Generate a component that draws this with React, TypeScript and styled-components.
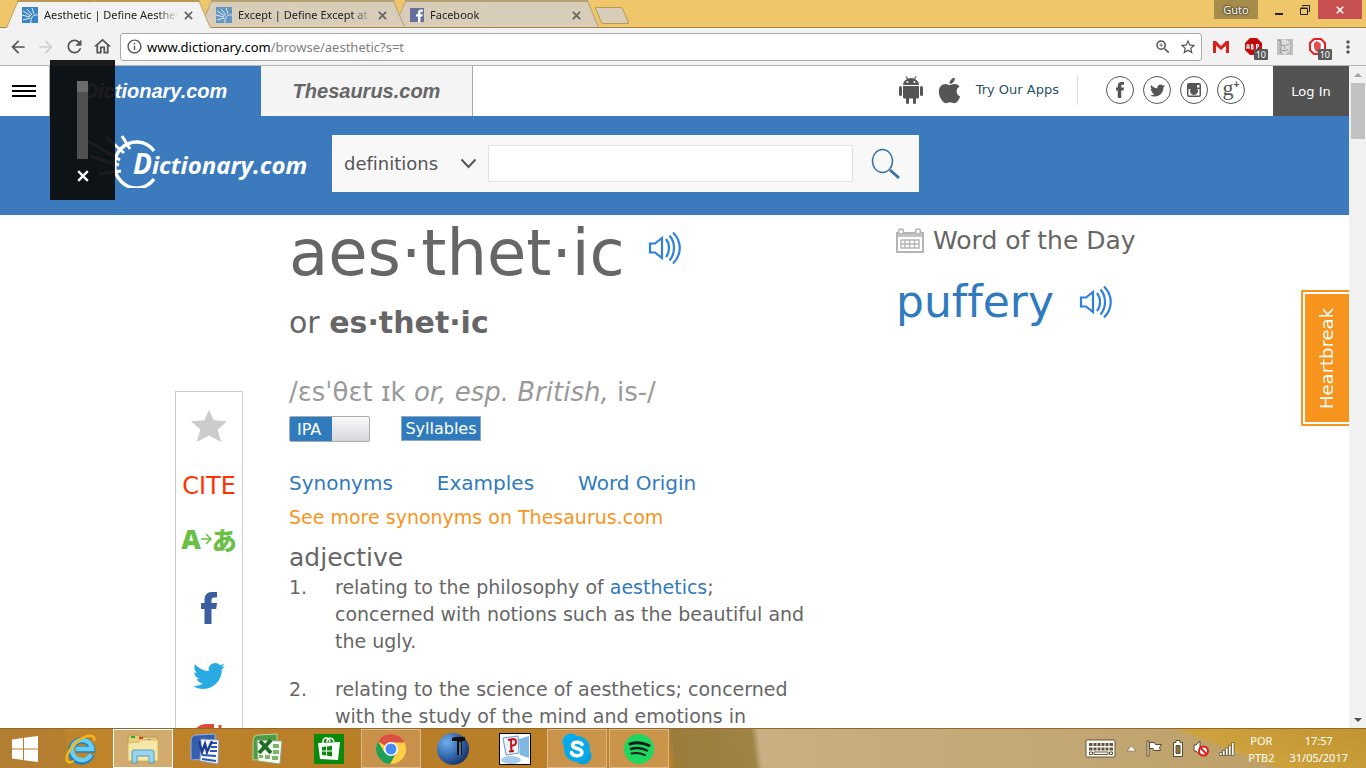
import React from 'react';
import styled, { createGlobalStyle, css } from 'styled-components';
import {
  MdArrowBack,
  MdArrowForward,
  MdRefresh,
  MdOutlineHome,
  MdInfoOutline,
  MdOutlineZoomIn,
  MdStarBorder,
  MdMoreVert,
} from 'react-icons/md';
import { FaApple, FaTwitter } from 'react-icons/fa';

const UI_FONT = '"Noto Sans", "Open Sans", sans-serif';
const SITE_FONT = '"DejaVu Sans", Verdana, sans-serif';
const BLUE = '#3c7abe';
const LINK = '#2f7bbd';

const GlobalStyle = createGlobalStyle`
  *, *::before, *::after { box-sizing: border-box; }
  body { margin: 0; overflow: hidden; background: #fff; }
  button, input, select { font: inherit; color: inherit; border: 0; padding: 0; margin: 0; background: none; border-radius: 0; }
  h1, h2, h3, p, ol { margin: 0; padding: 0; font-weight: 400; }
  a { color: inherit; text-decoration: none; }
  svg { display: block; flex: none; }
`;

const Screen = styled.div`
  height: 100vh;
  display: flex;
  flex-direction: column;
  font-family: ${UI_FONT};
`;

/* ---------- browser window ---------- */

const TitleBar = styled.header`
  display: flex;
  height: 28px;
  flex: none;
  background: #efc66a;
  box-shadow: inset 0 -1px 0 #a8854a;
`;

const TabStrip = styled.nav`
  display: flex;
  flex: 1;
  padding-left: 6px;
`;

const TabShell = styled.div<{ $active?: boolean; $order: number }>`
  --fill: ${(p) => (p.$active ? '#f2f2f2' : '#d7cdb9')};
  --edge: ${(p) => (p.$active ? '#b99a52' : '#b3a070')};
  position: relative;
  z-index: ${(p) => p.$order};
  display: flex;
  align-items: center;
  width: 205px;
  height: 28px;
  margin-right: -11px;
  padding: 2px 15px 0 16px;
  font-size: 11px;
  color: #222;

  &::before,
  &::after {
    content: '';
    position: absolute;
    z-index: -1;
    top: 0;
    bottom: ${(p) => (p.$active ? '0' : '1px')};
    width: 51%;
    background: var(--fill);
    border-top: 2px solid var(--edge);
  }
  &::before {
    left: 0;
    border-left: 1px solid var(--edge);
    transform: skewX(-23deg);
    transform-origin: bottom left;
  }
  &::after {
    right: 0;
    border-right: 1px solid var(--edge);
    transform: skewX(23deg);
    transform-origin: bottom right;
  }
`;

const TabTitle = styled.a`
  flex: 1;
  margin-left: 6px;
  overflow: hidden;
  white-space: nowrap;
  line-height: 18px;
  mask-image: linear-gradient(90deg, #000 85%, transparent);
`;

const TabClose = styled.button`
  display: grid;
  place-items: center;
  width: 16px;
  height: 16px;
  margin-left: 2px;
  color: #666;
`;

const NewTab = styled.button`
  align-self: flex-start;
  width: 28px;
  height: 17px;
  margin: 7px 0 0 10px;
  background: #d7cdb9;
  border: 1px solid #b99a52;
  border-radius: 2px;
  transform: skewX(23deg);
`;

const WindowControls = styled.div`
  display: flex;
  align-items: flex-start;
  padding-right: 4px;
`;

const ProfileButton = styled.button`
  width: 44px;
  height: 19px;
  margin-right: 8px;
  background: #a68c4a;
  color: #fff;
  font-size: 11px;
  line-height: 17px;
  text-shadow: 0 0 2px #222, 0 0 2px #222;
`;

const WindowButton = styled.button<{ $close?: boolean }>`
  display: grid;
  place-items: center;
  width: ${(p) => (p.$close ? '44px' : '26px')};
  height: 19px;
  color: ${(p) => (p.$close ? '#fff' : '#222')};
  background: ${(p) => (p.$close ? '#c75050' : 'transparent')};
`;

const Toolbar = styled.div`
  display: flex;
  align-items: center;
  height: 38px;
  flex: none;
  padding: 0 3px 0 4px;
  background: #f2f2f2;
  border-bottom: 1px solid #b4b4b4;
  color: #555;
`;

const ToolButton = styled.button<{ $dim?: boolean; $width?: number }>`
  position: relative;
  display: grid;
  place-items: center;
  width: ${(p) => p.$width ?? 28}px;
  height: 28px;
  flex: none;
  color: ${(p) => (p.$dim ? '#d0d0d0' : '#555')};
`;

const Omnibox = styled.div`
  flex: 1;
  display: flex;
  align-items: center;
  height: 28px;
  margin: 0 3px 0 4px;
  padding: 0 1px 0 5px;
  background: #fff;
  border: 1px solid #a9a9a9;
  border-radius: 3px;
`;

const Address = styled.div`
  flex: 1;
  margin-left: 4px;
  font-size: 13px;
  line-height: 20px;
  color: #808080;
  outline: none;
  white-space: nowrap;
  strong { font-weight: 400; color: #000; }
`;

const CountBadge = styled.span`
  position: absolute;
  right: 1px;
  bottom: 1px;
  padding: 0 2px;
  background: #5a5a5a;
  border-radius: 1px;
  color: #fff;
  font: 9px/11px ${UI_FONT};
`;

/* ---------- web page ---------- */

const Viewport = styled.div`
  flex: 1;
  min-height: 0;
  display: flex;
  position: relative;
`;

const Page = styled.div`
  flex: 1;
  min-width: 0;
  overflow: hidden;
  background: #fff;
  color: #666;
  font-family: ${SITE_FONT};
  font-variant-ligatures: none;
`;

const TopBar = styled.div`
  display: flex;
  height: 50px;
  color: #555;
`;

const MenuButton = styled.button`
  display: flex;
  flex-direction: column;
  justify-content: center;
  gap: 3px;
  width: 50px;
  padding-left: 12px;
  border-right: 1px solid #aaa;
  i { display: block; width: 24px; height: 2px; background: #000; }
`;

const SiteTab = styled.a<{ $current?: boolean }>`
  display: grid;
  place-items: center;
  width: ${(p) => (p.$current ? '211px' : '212px')};
  font: italic bold 20px/50px "Liberation Sans", Arial, sans-serif;
  ${(p) =>
    p.$current
      ? css`background: ${BLUE}; color: #fff;`
      : css`background: #f4f4f4; color: #666; border-right: 1px solid #aaa;`}
`;

const TopLinks = styled.div`
  display: flex;
  align-items: center;
  margin-left: auto;
  padding-bottom: 2px;
`;

const AppsLink = styled.a`
  display: flex;
  align-items: center;
  gap: 12px;
  padding-right: 18px;
  border-right: 1px solid #ddd;
  line-height: 30px;
  font-size: 13px;
  color: #2c4f66;
  svg { color: #555; }
`;

const SocialRow = styled.div`
  display: flex;
  gap: 9px;
  padding: 0 28px;
`;

const SocialCircle = styled.a`
  display: grid;
  place-items: center;
  width: 28px;
  height: 28px;
  border: 1px solid #555;
  border-radius: 50%;
  color: #555;
`;

const GooglePlus = styled.span`
  font: 22px/20px "Liberation Serif", serif;
  margin-top: -5px;
  sup { font: bold 10px/10px "Liberation Sans", sans-serif; vertical-align: 7px; }
`;

const LoginButton = styled.button`
  width: 76px;
  background: #535353;
  color: #fff;
  font-size: 13px;
`;

const Masthead = styled.div`
  display: flex;
  align-items: center;
  height: 99px;
  padding: 0 20px 4px 76px;
  background: ${BLUE};
`;

const Logo = styled.a`
  display: flex;
  align-items: center;
  width: 256px;
  padding-bottom: 6px;
  color: #fff;
  font: italic bold 24px/36px "Open Sans", "Noto Sans", sans-serif;
  span { margin: 6px 0 0 -33px; }
  span::first-letter { font-size: 28px; }
`;

const SearchForm = styled.form`
  display: flex;
  align-items: center;
  height: 57px;
  flex: 0 1 587px;
  padding-left: 8px;
  background: #f8f8f8;
`;

const SelectWrap = styled.label`
  display: flex;
  align-items: center;
  width: 148px;
  color: #555;
  select {
    width: 120px;
    height: 37px;
    padding-left: 4px;
    appearance: none;
    font-size: 18px;
  }
`;

const SearchInput = styled.input`
  flex: 1;
  min-width: 0;
  height: 37px;
  background: #fff;
  border: 1px solid #e2e2e2;
  font-size: 18px;
`;

const SearchButton = styled.button`
  width: 66px;
  display: grid;
  place-items: center;
`;

const Content = styled.div`
  display: grid;
  grid-template-columns: 68px 1fr 278px;
  column-gap: 46px;
  max-width: 999px;
  margin: 0 auto;
`;

const Rail = styled.aside`
  margin-top: 176px;
  padding-top: 4px;
  border: 1px solid #ccc;
`;

const RailItem = styled.a<{ $height: number }>`
  display: grid;
  place-items: center;
  height: ${(p) => p.$height}px;
  font-size: 24px;
  color: #f30;
`;

const TranslateMark = styled.span`
  display: flex;
  align-items: center;
  color: #6abf47;
  font: bold 27px/30px "Open Sans", "Noto Sans CJK JP", sans-serif;
  b:last-child { font: 900 25px/30px "Noto Sans CJK JP", sans-serif; }
`;

const Entry = styled.main`
  padding-right: 40px;
`;

const Headword = styled.div`
  display: flex;
  align-items: center;
  gap: 23px;
  h1 { font-size: 64px; line-height: 76px; }
  button { margin-bottom: 10px; }
`;

const Variant = styled.p`
  font-size: 30px;
  line-height: 64px;
`;

const Pronunciation = styled.p`
  margin-top: 17px;
  font-size: 26px;
  line-height: 40px;
  white-space: nowrap;
  color: #999;
`;

const Controls = styled.div`
  display: flex;
  gap: 31px;
  margin-top: 4px;
  font-size: 16px;
  color: #fff;
`;

const Switch = styled.label`
  position: relative;
  display: flex;
  width: 81px;
  height: 26px;
  padding-left: 7px;
  line-height: 25px;
  border: 1px solid #aaa;
  border-radius: 2px;
  background: linear-gradient(90deg, ${LINK} 42px, transparent 42px), linear-gradient(#fafafa, #d5d7da);
  input { position: absolute; inset: 0; width: 100%; height: 100%; appearance: none; }
`;

const Syllables = styled.button`
  width: 80px;
  height: 25px;
  background: ${LINK};
  border: 1px solid #8fa9c0;
  line-height: 23px;
`;

const JumpLinks = styled.nav`
  display: flex;
  gap: 44px;
  margin-top: 26px;
  font-size: 20px;
  line-height: 30px;
  color: ${LINK};
`;

const MoreLink = styled.a`
  display: block;
  margin-top: 4px;
  font-size: 19px;
  line-height: 30px;
  color: #f7941d;
`;

const PartOfSpeech = styled.h2`
  margin-top: 11px;
  font-size: 25px;
  line-height: 30px;
`;

const Definitions = styled.ol`
  list-style: none;
  margin-top: 1px;
`;

const Definition = styled.li`
  display: grid;
  grid-template-columns: 46px 1fr;
  margin-bottom: 21px;
  font-size: 19px;
  line-height: 27px;
  a { color: ${LINK}; }
`;

const WordOfDay = styled.aside`
  padding-top: 11px;
`;

const WordHeading = styled.h2`
  display: flex;
  align-items: center;
  gap: 9px;
  font-size: 25px;
  line-height: 30px;
  white-space: nowrap;
`;

const DailyWord = styled.div`
  display: flex;
  align-items: center;
  gap: 25px;
  margin-top: 18px;
  font-size: 44px;
  line-height: 56px;
  color: ${LINK};
`;

const Ribbon = styled.a`
  position: absolute;
  top: 224px;
  right: 17px;
  width: 48px;
  height: 136px;
  padding: 2px 0 2px 2px;
  border: 2px solid #f7941d;
  border-right: 0;
  border-radius: 2px 0 0 2px;
  background: #fff;
  span {
    display: grid;
    place-items: center;
    height: 100%;
    background: #f7941d;
    color: #fff;
    font: 18px/44px ${SITE_FONT};
    writing-mode: vertical-rl;
    transform: rotate(180deg);
  }
`;

const ScrollBar = styled.div`
  display: flex;
  flex-direction: column;
  align-items: center;
  width: 17px;
  flex: none;
  background: #f1f1f1;
  div { width: 14px; height: 56px; margin-bottom: auto; background: #c1c1c1; }
  button { display: grid; place-items: center; width: 17px; height: 17px; }
`;

const VolumePanel = styled.div`
  position: absolute;
  z-index: 5;
  top: 60px;
  left: 50px;
  display: flex;
  flex-direction: column;
  align-items: center;
  gap: 11px;
  width: 65px;
  height: 140px;
  padding-top: 21px;
  background: rgba(11, 11, 11, 0.93);
  color: #fff;
`;

const VolumeSlider = styled.input`
  width: 11px;
  height: 78px;
  margin: 0;
  appearance: none;
  writing-mode: vertical-lr;
  direction: rtl;
  background: #505050;
  &::-webkit-slider-runnable-track { width: 11px; height: 78px; }
  &::-webkit-slider-thumb { appearance: none; width: 11px; height: 11px; background: #6c6c6c; }
`;

/* ---------- desktop task bar ---------- */

const TaskBar = styled.footer`
  display: flex;
  align-items: stretch;
  height: 40px;
  flex: none;
  border-top: 1px solid #8f6a2c;
  background:
    linear-gradient(21deg, transparent 44%, #cda23c 48%, #c0952f 100%) right / 250px 100% no-repeat,
    linear-gradient(83deg, #b27e31 0, #b57f30 66px, #c0842a 72px, #b87d28 400px, #bd8128 665px, #9b7c3b 672px, #9e8345 750px, #c8b083 757px, #c1a673 1100px, #bb9c60 100%);
`;

const TaskButton = styled.button<{ $state?: 'open' | 'active'; $start?: boolean }>`
  display: grid;
  place-items: center;
  width: ${(p) => (p.$start ? '50px' : '60px')};
  margin-right: ${(p) => (p.$start ? '1px' : '2px')};
  border: 1px solid transparent;
  ${(p) => p.$state === 'open' && css`background: rgba(232, 190, 150, 0.32); border-color: #dcb98a;`}
  ${(p) => p.$state === 'active' && css`background: rgba(232, 210, 180, 0.5); border-color: #fff;`}
`;

const Tray = styled.div`
  display: flex;
  align-items: center;
  margin-left: auto;
  padding-right: 18px;
  color: #fff;
  font-size: 11px;
  line-height: 17px;
  text-align: center;
`;

const TrayIcons = styled.div`
  display: flex;
  align-items: center;
  gap: 10px;
  margin-right: 13px;
`;

const TrayText = styled.div`
  margin-right: 15px;
  &:last-child { margin-right: 0; }
`;

/* ---------- drawings ---------- */

const SunFavicon = ({ dim }: { dim?: boolean }) => (
  <svg width="16" height="16" viewBox="0 0 16 16" opacity={dim ? 0.75 : 1}>
    <rect width="16" height="16" fill="#3c86c8" />
    <g stroke="#e8f1f8" strokeWidth="1" fill="none">
      <path d="M1 4l8 5M5 2l5 6M10 1l2 6M0 8l8 2M1 13l7-2M16 8c-4-1-8 2-7 8" />
    </g>
  </svg>
);

const FacebookFavicon = () => (
  <svg width="14" height="14" viewBox="0 0 14 14">
    <rect width="14" height="14" fill="#66719b" />
    <path d="M8 14V8.500H6V6.300h2V4.500C8 2.500 9.200 1.500 11 1.500h1.800v2.200h-1.300c-.8 0-1.100.4-1.100 1.100v1.500h2.300l-.3 2.200h-2V14z" fill="#fff" />
  </svg>
);

const Cross = ({ size = 9, width = 2 }: { size?: number; width?: number }) => (
  <svg width={size} height={size} viewBox="0 0 10 10" stroke="currentColor" strokeWidth={width}>
    <path d="M1 1l8 8M9 1l-8 8" />
  </svg>
);

const Speaker = () => (
  <svg width="34" height="34" viewBox="0 0 34 34" fill="none" stroke="#2f7fdc" strokeWidth="2.200">
    <path d="M2 12.500h5l7-5.500v20l-7-5.500H2z" />
    <path d="M18 8c4 5 4 13 0 18M21.500 4.500c6 7 6 18 0 25M25 1.500c9 9 9 22 0 31" />
  </svg>
);

const SunLogo = () => (
  <svg width="90" height="54" viewBox="0 0 90 54" fill="none" stroke="#fff" strokeWidth="3">
    <path d="M78 17a22 23 0 1 0 0 28" strokeWidth="3.500" />
    <path d="M46 2l8 13M30 3l18 16M12 7l32 19M14 22l29 9M23 40l22-3" />
  </svg>
);

/* Stocky letter mark used both in the header circle and in the share rail. */
const FacebookMark = ({ width, color = 'currentColor' }: { width: number; color?: string }) => (
  <svg width={width} height={width * 2} viewBox="0 0 16 32" fill={color}>
    <path d="M3.500 32V17H0v-6h3.500V8C3.500 3 6 0 11 0h5v5.500h-3c-2 0-2.500 1-2.500 2.500v3H16l-.8 6h-4.700v15z" />
  </svg>
);

const AndroidMark = () => (
  <svg width="24" height="28" viewBox="0 0 24 28" fill="#555">
    <path fillRule="evenodd" d="M4 9c0-3 2-5 4-6L6.500.7l.8-.6L9 2.500c2-.7 4-.7 6 0L16.700.1l.8.6L16 3c2 1 4 3 4 6zM8.500 5a1 1 0 1 0 0 2 1 1 0 1 0 0-2zm7 0a1 1 0 1 0 0 2 1 1 0 1 0 0-2z" />
    <path d="M4 10h16v11q0 1.500-1.500 1.500H17V27q0 1-1.500 1T14 27v-4.500h-4V27q0 1-1.500 1T7 27v-4.500H5.500Q4 22.500 4 21z" />
    <rect y="10" width="3" height="10" rx="1.500" />
    <rect x="21" y="10" width="3" height="10" rx="1.500" />
  </svg>
);

const InstagramMark = () => (
  <svg width="16" height="16" viewBox="0 0 16 16">
    <path fillRule="evenodd" fill="#555" d="M3 1h10a2 2 0 0 1 2 2v10a2 2 0 0 1-2 2H3a2 2 0 0 1-2-2V3a2 2 0 0 1 2-2zm8 2v2.500h2.500V3zM2.500 7v6.500h11V7h-2a4 4 0 1 1-7 0z" />
    <circle cx="8" cy="8.800" r="2.500" fill="#555" />
  </svg>
);

const GooglePlusMark = () => (
  <svg width="34" height="36" viewBox="0 0 34 36" fill="none" stroke="#dd4b39" strokeWidth="4">
    <path d="M22 2h-9c-11 1-11 14-1 14 8-1 8-11 1-13M12 16c-2 4 9 5 8 11-1 7-17 7-17 0 0-4 5-5 10-5" />
    <path d="M28 1v14M22 8h12" strokeWidth="3" />
  </svg>
);

const CalendarIcon = () => (
  <svg width="28" height="26" viewBox="0 0 28 26" fill="none" stroke="#b5b5b5">
    <path d="M1 5h26v19H1z" strokeWidth="2" />
    <path d="M2 6h24v3H2z" fill="#c4c4c4" stroke="none" />
    <circle cx="5" cy="3.500" r="2.500" fill="#fff" strokeWidth="1.500" />
    <circle cx="22" cy="3.500" r="2.500" fill="#fff" strokeWidth="1.500" />
    <path d="M5 12h18v8H5zM5 16h18M9 12v8M13.500 12v8M18.500 12v8" strokeWidth="1.400" />
  </svg>
);

const StartIcon = () => (
  <svg width="28" height="28" viewBox="0 0 28 28" fill="#fff">
    <path d="M1 4.500l11-1.500v10.500H1zM13 2.800L27 1v12.500H13zM1 14.500h11V25L1 23.500zM13 14.500h14V27l-14-1.800z" />
  </svg>
);

const IeIcon = () => (
  <svg width="32" height="32" viewBox="0 0 32 32" fill="none">
    <path d="M26.500 21.500A10.500 10.500 0 1 1 27 16.500H11" stroke="#1f7fb8" strokeWidth="6.500" />
    <path d="M26 21.500A10 10 0 1 1 27 16H11" stroke="#66cdf5" strokeWidth="4.500" />
    <path d="M29 8c2-7-7-7-16 0S-1 26 3 29c2 1 4 0 6-1" stroke="#f5b818" strokeWidth="2.500" />
  </svg>
);

const FolderIcon = () => (
  <svg width="34" height="32" viewBox="0 0 34 32">
    <path d="M2 5l2-3h8l2 2h16l2 3v21H2z" fill="#e8cf78" stroke="#b89a4a" />
    <path d="M5 3h4v2H5z" fill="#1eae3c" />
    <path d="M13 4h4v2h-4z" fill="#d43b2a" />
    <path d="M21 6h4v2h-4z" fill="#2d8fe0" />
    <path d="M2 10l11-1 2-2h17v21H2z" fill="#f7e7a6" stroke="#d3b964" />
    <path d="M6 30V19q0-2 2-2h18q2 0 2 2v11h-5v-7H11v7z" fill="#9bd4ee" stroke="#4c9cc4" />
  </svg>
);

const WordIcon = () => (
  <svg width="32" height="32" viewBox="0 0 32 32">
    <path d="M2 27V8q0-6 6-6l18-1v24z" fill="#3560ae" stroke="#8fb0e8" />
    <path d="M12 6l18 1-1 24-18-3z" fill="#f5f8ff" stroke="#8899bb" />
    <path d="M10 8l3 11 3-8 2 8 5-11" fill="none" stroke="#1c3f94" strokeWidth="2.500" />
    <path d="M23 10h5M22 14h6M21 18h7M13 22l14 1M13 26l14 2" stroke="#2c55ab" strokeWidth="2" />
  </svg>
);

const ExcelIcon = () => (
  <svg width="32" height="32" viewBox="0 0 32 32">
    <path d="M2 27V8q0-6 6-6l18-1v24z" fill="#4e9a45" stroke="#b4dba0" />
    <path d="M6 7l25 1-2 23-22-3z" fill="#f4faf0" stroke="#88a880" />
    <path d="M9 8l11 12M20 7L8 20" stroke="#1f6e28" strokeWidth="4" />
    <path d="M22 11h6v4h-6zM22 17h6v4h-6zM21 23h6v4h-6zM14 22h5v4h-5zM8 22h4v3H8z" fill="#7fb36f" />
  </svg>
);

const StoreIcon = () => (
  <svg width="30" height="30" viewBox="0 0 30 30">
    <rect width="30" height="30" fill="#0a8a0a" />
    <path d="M4 9l22-1-2 18L6 25z" fill="#fff" />
    <path d="M9 9c-1-6 6-7 7-1M13 8c0-5 6-5 7 0" fill="none" stroke="#fff" strokeWidth="1.500" />
    <path d="M8 13l4-.5v4H8zM13 12.400l5-.6v4.700h-5zM8 17.500h4v4L8 21zM13 17.500h5v5l-5-.7z" fill="#0a8a0a" />
  </svg>
);

const ChromeIcon = () => (
  <svg width="32" height="32" viewBox="0 0 32 32">
    <circle cx="16" cy="16" r="15" fill="#fdd045" />
    <path d="M16 16L3 8.500A15 15 0 0 1 29.500 9.500H16z" fill="#dd5144" />
    <path d="M3 8.500A15 15 0 0 0 15 31l6.500-11.500L16 16 9.500 19.500z" fill="#1f9e5a" />
    <circle cx="16" cy="16" r="7" fill="#fff" />
    <circle cx="16" cy="16" r="5.500" fill="#4a8af4" />
  </svg>
);

const GlobeTIcon = () => (
  <svg width="34" height="34" viewBox="0 0 34 34">
    <defs>
      <radialGradient id="globe" cx=".3" cy=".3" r=".8">
        <stop offset="0" stopColor="#6fb0ec" />
        <stop offset=".6" stopColor="#2f62a8" />
        <stop offset="1" stopColor="#16305e" />
      </radialGradient>
    </defs>
    <circle cx="17" cy="17" r="16" fill="url(#globe)" />
    <path d="M16 6q4-2 13-1v4h-3v14h-5V9h-5z" fill="#111" />
    <path d="M24 10v13" stroke="#6f92c0" strokeWidth="1.500" />
  </svg>
);

const PIcon = () => (
  <svg width="32" height="32" viewBox="0 0 32 32">
    <rect x=".5" y=".5" width="31" height="31" fill="#fff" stroke="#000" />
    <path d="M20 6l10-3v22l-9-3z" fill="#7db7e4" />
    <ellipse cx="12" cy="27" rx="10" ry="4" fill="#a8cdec" />
    <path d="M4 5l15-2 1 17-13 2z" fill="#eaf2fa" stroke="#6c9ccc" />
    <path d="M9 7l5-1c4 0 4 6 0 6.500l-2 .3.500 5.200M12 6.500L12.500 18M10 18.500l5-.6" fill="none" stroke="#c01818" strokeWidth="2" />
  </svg>
);

const SkypeIcon = () => (
  <svg width="32" height="32" viewBox="0 0 32 32">
    <circle cx="10" cy="9" r="8.500" fill="#00aff0" />
    <circle cx="22" cy="23" r="8.500" fill="#0aa0dc" />
    <circle cx="16" cy="16" r="13" fill="#05a9ea" />
    <path d="M21 11.500c-1-3-9-3.500-9.500.5-.3 4.500 9.500 2.500 9.500 7.500-.3 4.500-9.500 4-10.500 0" fill="none" stroke="#fff" strokeWidth="3.500" strokeLinecap="round" />
  </svg>
);

const SpotifyIcon = () => (
  <svg width="32" height="32" viewBox="0 0 32 32" fill="none" stroke="#15201a" strokeLinecap="round">
    <circle cx="16" cy="16" r="15" fill="#1ed760" stroke="none" />
    <path d="M7 11c6-2 13-1.500 19 1.500" strokeWidth="3" />
    <path d="M8 16c5-1.500 11-1 16 1.500" strokeWidth="2.500" />
    <path d="M8.500 20.500c5-1 9-.6 13.500 1.600" strokeWidth="2" />
  </svg>
);

const Extensions = () => (
  <>
    <ToolButton $width={32} aria-label="Mail">
      <svg width="16" height="12" viewBox="0 0 16 12">
        <rect width="16" height="12" fill="#f4eeee" />
        <path d="M0 0h3l5 5 5-5h3v12h-3V4.500L8 9 3 4.500V12H0z" fill="#d8201c" />
      </svg>
    </ToolButton>
    <ToolButton $width={32} aria-label="Ad blocker">
      <svg width="17" height="17" viewBox="0 0 17 17">
        <path d="M5 0h7l5 5v7l-5 5H5l-5-5V5z" fill="#c4090b" />
        <path d="M2 11V7.500q0-1 1-1t1 1V11M2 9.500h2M6.500 6.500V11h1.200q1.300-1.100 0-2.200 1-1.200-.2-2.300zM11.500 11V6.500h1.200q1.800 1.300 0 2.500h-1" fill="none" stroke="#fff" strokeWidth="1.100" />
      </svg>
      <CountBadge>10</CountBadge>
    </ToolButton>
    <ToolButton $width={32} aria-label="Portrait">
      <svg width="16" height="16" viewBox="0 0 16 16">
        <rect width="16" height="16" fill="#bdbdbd" />
        <path d="M4 2c3-3 8-1 9 4l-1 6-4 4-3-2-2-6z" fill="#dedede" />
        <path d="M4 6l3 .5M9 6l3-.5M8 6l-.5 4M5 11q3 2 6-.5M1 1l3 1v12" fill="none" stroke="#909090" />
      </svg>
    </ToolButton>
    <ToolButton $width={32} aria-label="Content blocker">
      <svg width="17" height="17" viewBox="0 0 17 17">
        <path d="M5 1h7l4 4v7l-4 4H5l-4-4V5z" fill="#fff" stroke="#e81f25" strokeWidth="2" />
        <path d="M5 9V5q1-1 1.500 0V4q1-2 2 0 1-1 1.700.3V5q1-.8 1.500.5V10q-.5 4-3.200 4Q6 14 5 9z" fill="#e84c50" />
      </svg>
      <CountBadge>10</CountBadge>
    </ToolButton>
    <ToolButton $width={30} aria-label="Menu"><MdMoreVert size={20} /></ToolButton>
  </>
);

const tabs = [
  { title: 'Aesthetic | Define Aesthetic', icon: <SunFavicon />, active: true },
  { title: 'Except | Define Except at Dictionary', icon: <SunFavicon dim />, active: false },
  { title: 'Facebook', icon: <FacebookFavicon />, active: false },
];

type Task = { name: string; icon: React.ReactNode; state?: 'open' | 'active' };
const tasks: Task[] = [
  { name: 'Internet Explorer', icon: <IeIcon /> },
  { name: 'File Explorer', icon: <FolderIcon />, state: 'active' },
  { name: 'Word', icon: <WordIcon /> },
  { name: 'Excel', icon: <ExcelIcon /> },
  { name: 'Store', icon: <StoreIcon /> },
  { name: 'Chrome', icon: <ChromeIcon />, state: 'open' },
  { name: 'T', icon: <GlobeTIcon /> },
  { name: 'P', icon: <PIcon /> },
  { name: 'Skype', icon: <SkypeIcon />, state: 'open' },
  { name: 'Spotify', icon: <SpotifyIcon />, state: 'open' },
];

export default function App() {
  return (
    <Screen>
      <GlobalStyle />
      <TitleBar>
        <TabStrip>
          {tabs.map((tab, i) => (
            <TabShell key={tab.title} $active={tab.active} $order={3 - i}>
              {tab.icon}
              <TabTitle href="#">{tab.title}</TabTitle>
              <TabClose aria-label="Close tab"><Cross /></TabClose>
            </TabShell>
          ))}
          <NewTab aria-label="New tab" />
        </TabStrip>
        <WindowControls>
          <ProfileButton>Guto</ProfileButton>
          <WindowButton aria-label="Minimize">
            <svg width="8" height="12" viewBox="0 0 8 12"><path d="M0 9h8v2H0z" fill="currentColor" /></svg>
          </WindowButton>
          <WindowButton aria-label="Restore">
            <svg width="10" height="10" viewBox="0 0 10 10" fill="none" stroke="currentColor">
              <path d="M.5 3.500h7v6h-7zM.5 3h7M2.500 1.500V.5h7v6h-1" />
            </svg>
          </WindowButton>
          <WindowButton $close aria-label="Close"><Cross size={8} /></WindowButton>
        </WindowControls>
      </TitleBar>
      <Toolbar>
        <ToolButton aria-label="Back"><MdArrowBack size={20} /></ToolButton>
        <ToolButton aria-label="Forward" $dim><MdArrowForward size={20} /></ToolButton>
        <ToolButton aria-label="Reload"><MdRefresh size={21} /></ToolButton>
        <ToolButton aria-label="Home"><MdOutlineHome size={21} /></ToolButton>
        <Omnibox>
          <MdInfoOutline size={17} />
          <Address role="textbox" aria-label="Address">
            <strong>www.dictionary.com</strong>/browse/aesthetic?s=t
          </Address>
          <ToolButton $width={25} aria-label="Zoom"><MdOutlineZoomIn size={18} /></ToolButton>
          <ToolButton $width={25} aria-label="Bookmark"><MdStarBorder size={18} /></ToolButton>
        </Omnibox>
        <Extensions />
      </Toolbar>

      <Viewport>
        <Page>
          <TopBar>
            <MenuButton aria-label="Site menu"><i /><i /><i /></MenuButton>
            <SiteTab href="#" $current>Dictionary.com</SiteTab>
            <SiteTab href="#">Thesaurus.com</SiteTab>
            <TopLinks>
              <AppsLink href="#">
                <AndroidMark />
                <FaApple size={29} />
                Try Our Apps
              </AppsLink>
              <SocialRow>
                <SocialCircle href="#" aria-label="Facebook"><FacebookMark width={8} /></SocialCircle>
                <SocialCircle href="#" aria-label="Twitter"><FaTwitter size={15} /></SocialCircle>
                <SocialCircle href="#" aria-label="Instagram"><InstagramMark /></SocialCircle>
                <SocialCircle href="#" aria-label="Google Plus"><GooglePlus>g<sup>+</sup></GooglePlus></SocialCircle>
              </SocialRow>
            </TopLinks>
            <LoginButton>Log In</LoginButton>
          </TopBar>
          <Masthead>
            <Logo href="#"><SunLogo /><span>Dictionary.com</span></Logo>
            <SearchForm onSubmit={(e) => e.preventDefault()}>
              <SelectWrap>
                <select aria-label="Search in">
                  <option>definitions</option>
                  <option>synonyms</option>
                </select>
                <svg width="17" height="11" viewBox="0 0 17 11" fill="none" stroke="#555" strokeWidth="2">
                  <path d="M1.500 1.500l7 7.500 7-7.500" />
                </svg>
              </SelectWrap>
              <SearchInput aria-label="Search" />
              <SearchButton aria-label="Search">
                <svg width="30" height="32" viewBox="0 0 30 32" fill="none" stroke="#3b73a5">
                  <ellipse cx="11.500" cy="13" rx="10" ry="11.500" strokeWidth="1.500" />
                  <path d="M19 22l9 8" strokeWidth="3" />
                </svg>
              </SearchButton>
            </SearchForm>
          </Masthead>

          <Content>
            <Rail>
              <RailItem href="#" $height={60} aria-label="Favorite">
                <svg width="36" height="34" viewBox="0 0 38 34" fill="#ccc">
                  <path d="M19 0l5 11 14 1-10 9 4 13-13-7-13 7 4-13L0 12l14-1z" />
                </svg>
              </RailItem>
              <RailItem href="#" $height={60}>CITE</RailItem>
              <RailItem href="#" $height={46}>
                <TranslateMark>
                  <b>A</b>
                  <svg width="11" height="12" viewBox="0 0 11 12" fill="none" stroke="currentColor" strokeWidth="1.500">
                    <path d="M0 6h10M5 1l5 5-5 5" />
                  </svg>
                  <b>あ</b>
                </TranslateMark>
              </RailItem>
              <RailItem href="#" $height={92} aria-label="Share on Facebook"><FacebookMark width={16} color="#3b5ea0" /></RailItem>
              <RailItem href="#" $height={44} aria-label="Share on Twitter"><FaTwitter size={32} color="#29aae3" /></RailItem>
              <RailItem href="#" $height={88} aria-label="Share on Google Plus"><GooglePlusMark /></RailItem>
            </Rail>

            <Entry>
              <Headword>
                <h1>aes·thet·ic</h1>
                <button aria-label="Listen"><Speaker /></button>
              </Headword>
              <Variant>or <b>es·thet·ic</b></Variant>
              <Pronunciation>/ɛsˈθɛt ɪk <i>or, esp. British,</i> is-/</Pronunciation>
              <Controls>
                <Switch>IPA<input type="checkbox" aria-label="IPA" defaultChecked /></Switch>
                <Syllables>Syllables</Syllables>
              </Controls>
              <JumpLinks>
                <a href="#">Synonyms</a>
                <a href="#">Examples</a>
                <a href="#">Word Origin</a>
              </JumpLinks>
              <MoreLink href="#">See more synonyms on Thesaurus.com</MoreLink>
              <PartOfSpeech>adjective</PartOfSpeech>
              <Definitions>
                <Definition>
                  <span>1.</span>
                  <p>relating to the philosophy of <a href="#">aesthetics</a>; concerned with notions such as the beautiful and the ugly.</p>
                </Definition>
                <Definition>
                  <span>2.</span>
                  <p>relating to the science of aesthetics; concerned with the study of the mind and emotions in</p>
                </Definition>
              </Definitions>
            </Entry>

            <WordOfDay>
              <WordHeading><CalendarIcon />Word of the Day</WordHeading>
              <DailyWord>
                <a href="#">puffery</a>
                <button aria-label="Listen"><Speaker /></button>
              </DailyWord>
            </WordOfDay>
          </Content>
        </Page>
        <Ribbon href="#"><span>Heartbreak</span></Ribbon>
        <ScrollBar aria-hidden="true">
          <button tabIndex={-1}><svg width="8" height="4" viewBox="0 0 8 4"><path d="M4 0l4 4H0z" fill="#a3a3a3" /></svg></button>
          <div />
          <button tabIndex={-1}><svg width="8" height="4" viewBox="0 0 8 4"><path d="M4 4l4-4H0z" fill="#505050" /></svg></button>
        </ScrollBar>
      </Viewport>

      <VolumePanel>
        <VolumeSlider type="range" aria-label="Volume" min={0} max={100} defaultValue={100} />
        <button aria-label="Dismiss"><Cross size={12} width={2} /></button>
      </VolumePanel>

      <TaskBar>
        <TaskButton $start aria-label="Start"><StartIcon /></TaskButton>
        {tasks.map((t) => (
          <TaskButton key={t.name} $state={t.state} aria-label={t.name}>{t.icon}</TaskButton>
        ))}
        <Tray>
          <TrayIcons>
            <svg width="32" height="20" viewBox="0 0 32 20">
              <rect x="1" y="1" width="29" height="17" rx="1" fill="#fff" stroke="#665538" />
              <path d="M4 4h24v3H4zM4 8.500h24v3H4z" fill="#665538" />
              <path d="M8 4v8M12 4v8M16 4v8M20 4v8M24 4v8" stroke="#fff" />
              <path d="M4.500 13h3v2.500h-3zM9 13h14v2.500H9zM24.500 13h3v2.500h-3z" fill="none" stroke="#665538" />
            </svg>
            <svg width="9" height="6" viewBox="0 0 9 6"><path d="M4.500 0L9 5H0z" fill="#fff" stroke="#665538" strokeWidth=".5" /></svg>
            <svg width="17" height="17" viewBox="0 0 17 17" fill="#fff" stroke="#5c4a28">
              <path d="M1 1h2v15H1zM3.500 2.500h5l1 2h6l-2 3 1 3H8l-1-2H3.500z" />
            </svg>
            <svg width="10" height="17" viewBox="0 0 10 17" fill="#fff" stroke="#5c4a28">
              <path d="M3 .5h4v2h2.500v14h-9v-14H3z" />
              <path d="M3 5.500h4v8H3z" fill="#8f7440" />
            </svg>
            <svg width="16" height="17" viewBox="0 0 16 17" fill="none">
              <path d="M1 5h2l4-4v14l-4-4H1z" fill="#fff" stroke="#5c4a28" />
              <circle cx="10.500" cy="11" r="4.500" fill="#fff" stroke="#e01b1b" strokeWidth="2" />
              <path d="M7.500 8l6 6" stroke="#e01b1b" strokeWidth="2" />
            </svg>
            <svg width="16" height="14" viewBox="0 0 16 14" fill="#fff" stroke="#5c4a28" strokeWidth=".7">
              <path d="M.5 10.500h2.500v3H.5zM3.500 8.500H6v5H3.500zM6.500 6H9v7.500H6.500zM9.500 3.500H12v10H9.500zM12.500.5H15v13h-2.500z" />
            </svg>
          </TrayIcons>
          <TrayText>POR<br />PTB2</TrayText>
          <TrayText>17:57<br />31/05/2017</TrayText>
        </Tray>
      </TaskBar>
    </Screen>
  );
}
